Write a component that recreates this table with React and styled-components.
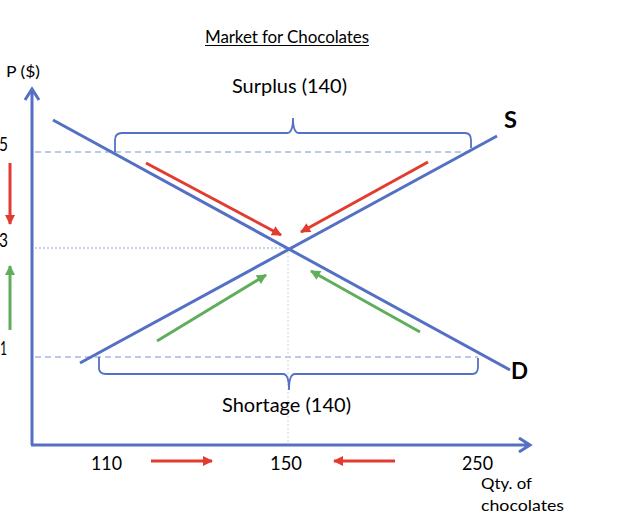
import React from 'react';
import styled, { createGlobalStyle } from 'styled-components';

const BLUE = '#5470c4';
const RED = '#e23b2f';
const GREEN = '#5fae5b';

const GlobalStyle = createGlobalStyle`
  html, body {
    margin: 0;
    padding: 0;
    background: #ffffff;
  }
`;

// chart labels, x / baseline / width taken off the reference
const labels = [
  { text: 'P ($)', x: 6, y: 77, w: 34, size: 16 },
  { text: 'Surplus (140)', x: 232, y: 93, w: 115, size: 19 },
  { text: 'Shortage (140)', x: 222, y: 412, w: 129, size: 19 },
  { text: '5', x: -1, y: 151, w: 9, size: 19 },
  { text: '3', x: -1, y: 247, w: 9, size: 19 },
  { text: '1', x: 0, y: 355, w: 7, size: 19 },
  { text: '110', x: 91, y: 470, w: 31, size: 19 },
  { text: '150', x: 270, y: 470, w: 32, size: 19 },
  { text: '250', x: 462, y: 470, w: 31, size: 19 },
  { text: 'Qty. of', x: 481, y: 489, w: 51, size: 16 },
  { text: 'chocolates', x: 481, y: 511, w: 83, size: 16 },
  { text: 'S', x: 504, y: 128, w: 13, size: 22, bold: true },
  { text: 'D', x: 511, y: 379, w: 17, size: 23, bold: true },
];

const arrows = [
  // red: pushed back down toward equilibrium
  { x1: 10, y1: 163, x2: 10, y2: 224, color: 'red' },
  { x1: 146, y1: 163, x2: 281, y2: 235, color: 'red' },
  { x1: 428, y1: 162, x2: 301, y2: 232, color: 'red' },
  { x1: 151, y1: 461, x2: 212, y2: 461, color: 'red' },
  { x1: 395, y1: 461, x2: 334, y2: 461, color: 'red' },
  // green: pushed back up
  { x1: 10, y1: 330, x2: 10, y2: 266, color: 'green' },
  { x1: 157, y1: 341, x2: 266, y2: 275, color: 'green' },
  { x1: 420, y1: 332, x2: 311, y2: 271, color: 'green' },
];

const guides = [
  { x1: 35, y1: 152, x2: 470, y2: 152, kind: 'dash' },
  { x1: 35, y1: 357, x2: 478, y2: 357, kind: 'dash' },
  { x1: 35, y1: 248, x2: 288, y2: 248, kind: 'dot' },
  { x1: 288, y1: 248, x2: 288, y2: 444, kind: 'faint' },
];

export default function App() {
  return (
    <Page>
      <GlobalStyle />
      <Title>Market for Chocolates</Title>
      <Chart viewBox="0 50 629 465" width="629" height="465">
        <defs>
          <marker id="head-red" viewBox="0 0 10 10" refX="9" refY="5"
            markerWidth="11" markerHeight="10" markerUnits="userSpaceOnUse" orient="auto">
            <path d="M0 0 L10 5 L0 10 z" fill={RED} />
          </marker>
          <marker id="head-green" viewBox="0 0 10 10" refX="9" refY="5"
            markerWidth="11" markerHeight="10" markerUnits="userSpaceOnUse" orient="auto">
            <path d="M0 0 L10 5 L0 10 z" fill={GREEN} />
          </marker>
        </defs>

        {guides.map((g, i) => (
          <Guide key={i} {...g} $kind={g.kind} />
        ))}

        {/* axes */}
        <Axis d="M32 445 L32 90 M25 100 L32 89 L39 100" />
        <Axis d="M31 445 L529 445 M519 438 L530 445 L519 452" />

        {/* supply and demand */}
        <Curve x1="53" y1="120" x2="510" y2="370" />
        <Curve x1="80" y1="363" x2="497" y2="136" />

        {/* braces */}
        <Brace d="M115 152 L115 140 Q115 133 122 133 L287 133 Q293 133 293 118 Q293 133 299 133 L465 133 Q471 133 471 140 L471 148" />
        <Brace d="M99 357 L99 368 Q99 374 106 374 L283 374 Q289 374 289 390 Q289 374 295 374 L472 374 Q478 374 478 367 L478 358" />

        {arrows.map((a, i) => (
          <Arrow key={i} {...a} $color={a.color} markerEnd={`url(#head-${a.color})`} />
        ))}

        {labels.map(l => (
          <Label
            key={l.text}
            x={l.x}
            y={l.y}
            textLength={l.w}
            lengthAdjust="spacingAndGlyphs"
            $size={l.size}
            $bold={l.bold}
          >
            {l.text}
          </Label>
        ))}
      </Chart>
    </Page>
  );
}

const Page = styled.div`
  width: 629px;
  height: 515px;
  display: flex;
  flex-direction: column;
  overflow: hidden;
  background: #ffffff;
`;

const Title = styled.h1`
  box-sizing: border-box;
  height: 50px;
  margin: 0;
  padding: 27px 0 0 205px;
  font-family: Lato, 'Liberation Sans', sans-serif;
  font-size: 17px;
  font-weight: 400;
  line-height: 20px;
  letter-spacing: -0.1px;
  color: #000000;
  text-decoration: underline;
  text-decoration-thickness: 1px;
  text-underline-offset: 2px;
`;

const Chart = styled.svg`
  display: block;
  flex: none;
`;

const Axis = styled.path`
  fill: none;
  stroke: ${BLUE};
  stroke-width: 3;
  stroke-linejoin: miter;
`;

const Curve = styled.line`
  stroke: ${BLUE};
  stroke-width: 3;
`;

const Brace = styled.path`
  fill: none;
  stroke: ${BLUE};
  stroke-width: 1.8;
`;

const Guide = styled.line`
  stroke: ${p => (p.$kind === 'faint' ? '#c9d2ee' : '#7d90d2')};
  stroke-width: 1;
  stroke-dasharray: ${p => (p.$kind === 'dash' ? '6 4' : '2 2')};
  opacity: ${p => (p.$kind === 'dot' ? 0.8 : 1)};
`;

const Arrow = styled.line`
  stroke: ${p => (p.$color === 'red' ? RED : GREEN)};
  stroke-width: 3;
`;

const Label = styled.text`
  font-family: Lato, 'Liberation Sans', sans-serif;
  font-size: ${p => p.$size}px;
  font-weight: ${p => (p.$bold ? 700 : 400)};
  fill: #000000;
`;
